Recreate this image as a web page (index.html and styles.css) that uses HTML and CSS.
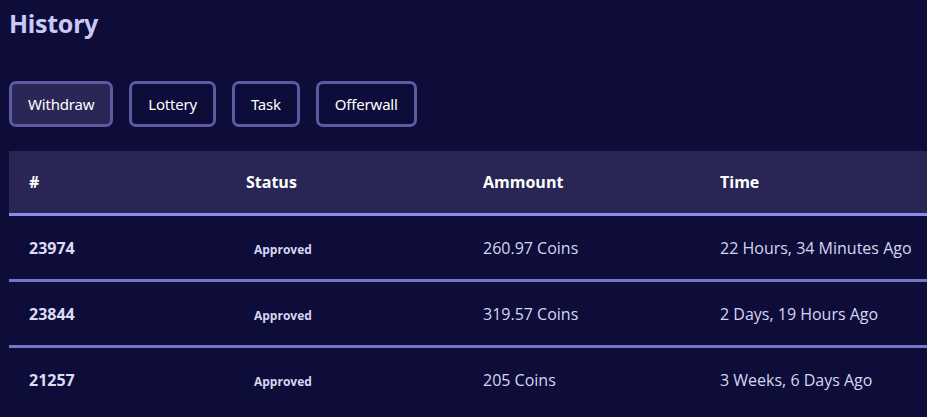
FILE: index.html
```html
<!DOCTYPE html>
<html>
<head>
<meta charset="utf-8">
<link rel="stylesheet" href="styles.css">
</head>
<body>
<div class="page">
  <h1 class="title">History</h1>
  <div class="tabs">
    <button class="tab active">Withdraw</button>
    <button class="tab">Lottery</button>
    <button class="tab">Task</button>
    <button class="tab">Offerwall</button>
  </div>
  <table class="history">
    <colgroup>
      <col class="col-first"><col class="col"><col class="col"><col>
    </colgroup>
    <thead>
      <tr><th>#</th><th>Status</th><th>Ammount</th><th>Time</th></tr>
    </thead>
    <tbody>
      <tr><td class="id">23974</td><td><span class="badge">Approved</span></td><td>260.97 Coins</td><td>22 Hours, 34 Minutes Ago</td></tr>
      <tr><td class="id">23844</td><td><span class="badge">Approved</span></td><td>319.57 Coins</td><td>2 Days, 19 Hours Ago</td></tr>
      <tr><td class="id">21257</td><td><span class="badge">Approved</span></td><td>205 Coins</td><td>3 Weeks, 6 Days Ago</td></tr>
    </tbody>
  </table>
</div>
</body>
</html>
```
FILE: styles.css
```css
html, body {
  margin: 0;
  padding: 0;
  background: #0e0c38;
  overflow: hidden;
  width: 927px;
  height: 417px;
}
.page {
  padding: 0 0 0 9px;
  font-family: "Open Sans", "Noto Sans", sans-serif;
  color: #d6d6f2;
}
.title {
  margin: 0;
  padding-top: 5px;
  height: 40px;
  font-family: "Noto Sans", sans-serif;
  font-weight: 700;
  font-size: 25px;
  line-height: 36px;
  color: #c9c9f7;
  letter-spacing: -0.3px;
}
.tabs {
  display: flex;
  gap: 16px;
  margin-top: 36px;
}
.tab {
  height: 46px;
  padding: 0 16px;
  border: 3px solid #5c5aa0;
  border-radius: 7px;
  background: #0e0c38;
  color: #ffffff;
  font-family: "Noto Sans", sans-serif;
  font-size: 15px;
  letter-spacing: -0.2px;
}
.tab.active {
  background: #2a2757;
}
.history {
  margin-top: 24px;
  border-collapse: collapse;
  width: 100%;
  table-layout: fixed;
}
.col-first {
  width: 217px;
}
.col {
  width: 237px;
}
.history th, .history td {
  padding: 0 0 0 20px;
  text-align: left;
  white-space: nowrap;
}
.history th {
  height: 62px;
  background: #292655;
  color: #ffffff;
  font-weight: 700;
  font-size: 16px;
  border-bottom: 3px solid #8b8cf0;
}
.history td {
  height: 63px;
  font-size: 16px;
  color: #d6d6f2;
  border-bottom: 3px solid #7476c8;
}
.history tbody tr:last-child td {
  border-bottom: none;
}
.history td.id {
  font-weight: 700;
  color: #dcdcf4;
}
.badge {
  display: inline-block;
  padding: 0 8px;
  font-size: 12px;
  font-weight: 700;
  color: #d6d6f2;
}
```
